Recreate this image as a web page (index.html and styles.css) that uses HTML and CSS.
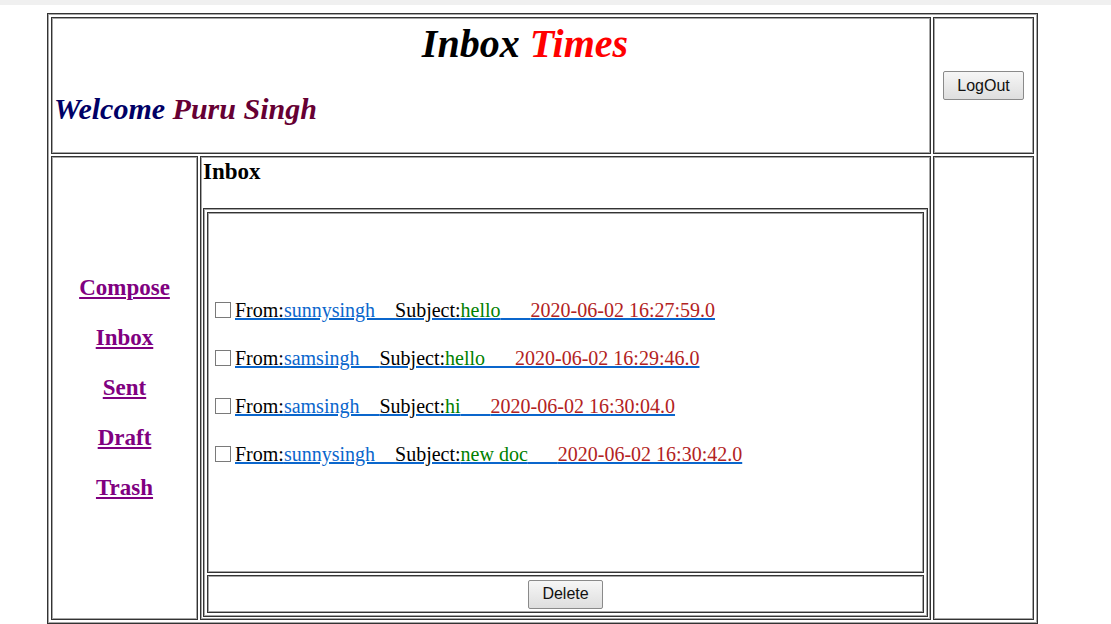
FILE: index.html
```html
<!DOCTYPE html>
<html lang="en">
<head>
    <meta charset="UTF-8">
    <title>Inbox Times</title>
    <link rel="stylesheet" href="styles.css">
</head>
<body>
    <div class="topbar"></div>
    <table class="frame">
        <tr>
            <td class="masthead" colspan="2">
                <h1 class="title">Inbox <span class="red">Times</span></h1>
                <h2 class="welcome">Welcome <span class="user">Puru Singh</span></h2>
            </td>
            <td class="logout"><button class="btn" type="button">LogOut</button></td>
        </tr>
        <tr>
            <td class="menu">
                <div class="menuitem"><a href="#">Compose</a></div>
                <div class="menuitem"><a href="#">Inbox</a></div>
                <div class="menuitem"><a href="#">Sent</a></div>
                <div class="menuitem"><a href="#">Draft</a></div>
                <div class="menuitem"><a href="#">Trash</a></div>
            </td>
            <td class="content">
                <h3 class="heading">Inbox</h3>
                <table class="mailbox">
                    <tr>
                        <td class="mails">
                            <div class="maillist">
                                <div class="mail"><input type="checkbox" class="pick"><a href="#" class="msg"><span class="label">From:</span>sunnysingh&nbsp;&nbsp;&nbsp;&nbsp;<span class="label">Subject:</span><span class="subj">hello</span>&nbsp;&nbsp;&nbsp;&nbsp;&nbsp;&nbsp;<span class="when">2020-06-02 16:27:59.0</span></a></div>
                                <div class="mail"><input type="checkbox" class="pick"><a href="#" class="msg"><span class="label">From:</span>samsingh&nbsp;&nbsp;&nbsp;&nbsp;<span class="label">Subject:</span><span class="subj">hello</span>&nbsp;&nbsp;&nbsp;&nbsp;&nbsp;&nbsp;<span class="when">2020-06-02 16:29:46.0</span></a></div>
                                <div class="mail"><input type="checkbox" class="pick"><a href="#" class="msg"><span class="label">From:</span>samsingh&nbsp;&nbsp;&nbsp;&nbsp;<span class="label">Subject:</span><span class="subj">hi</span>&nbsp;&nbsp;&nbsp;&nbsp;&nbsp;&nbsp;<span class="when">2020-06-02 16:30:04.0</span></a></div>
                                <div class="mail"><input type="checkbox" class="pick"><a href="#" class="msg"><span class="label">From:</span>sunnysingh&nbsp;&nbsp;&nbsp;&nbsp;<span class="label">Subject:</span><span class="subj">new doc</span>&nbsp;&nbsp;&nbsp;&nbsp;&nbsp;&nbsp;<span class="when">2020-06-02 16:30:42.0</span></a></div>
                            </div>
                        </td>
                    </tr>
                    <tr>
                        <td class="actions"><button class="btn" type="button">Delete</button></td>
                    </tr>
                </table>
            </td>
            <td class="side"></td>
        </tr>
    </table>
</body>
</html>
```
FILE: styles.css
```css
body {
    font-family: "Liberation Serif", "Times New Roman", serif;
    color: #000;
    background-color: #fff;
    margin: 0;
}
.topbar {
    height: 5px;
    background-color: #f0f0f0;
}
.frame,
.mailbox {
    border-collapse: separate;
    border-spacing: 2px;
    border: 1px solid #333;
    padding: 1px;
    box-shadow: inset 0 0 0 1px #a6a6a6;
}
.frame {
    margin: 8px 0 0 47px;
}
.mailbox {
    width: 100%;
    box-sizing: border-box;
}
.frame td,
.mailbox td {
    box-sizing: border-box;
    border: 1px solid #333;
    box-shadow: inset 0 0 0 1px #a6a6a6;
    padding: 2px;
}
.masthead {
    height: 137px;
    vertical-align: top;
}
.title {
    margin: 0;
    padding-left: 68px;
    text-align: center;
    font-size: 40px;
    font-style: italic;
    font-weight: bold;
}
.red {
    color: #ff0000;
}
.welcome {
    margin: 25px 0;
    font-size: 30px;
    font-style: italic;
    font-weight: bold;
    color: #000066;
}
.user {
    color: #660033;
}
.logout {
    width: 101px;
    text-align: center;
    vertical-align: middle;
}
.btn {
    font-family: "Liberation Sans", Arial, sans-serif;
    font-size: 16px;
    color: #111;
    height: 29px;
    padding: 0 13px;
    border: 1px solid #8a8a8a;
    border-radius: 2px;
    background: linear-gradient(#f6f6f6, #dedede);
}
.menu {
    width: 147px;
    text-align: center;
    vertical-align: middle;
}
.menuitem {
    font-size: 23px;
    line-height: 50px;
}
.menuitem a {
    color: #800080;
    font-weight: bold;
}
.content {
    width: 731px;
    vertical-align: top;
}
.heading {
    margin: 0 0 23px;
    font-size: 23px;
    font-weight: bold;
}
.mails {
    height: 361px;
    vertical-align: top;
}
.maillist {
    margin-top: 71px;
}
.mail {
    line-height: 48px;
    font-size: 20px;
}
.pick {
    appearance: none;
    box-sizing: border-box;
    width: 16px;
    height: 16px;
    margin: 0 4px 0 5px;
    border: 1px solid #7a7a7a;
    background-color: #fff;
    vertical-align: -1px;
}
.msg {
    color: #0a66cc;
    text-decoration: underline;
}
.label {
    color: #000;
}
.subj {
    color: #008000;
}
.when {
    color: #b22222;
}
.actions {
    height: 38px;
    text-align: center;
    vertical-align: middle;
}
.side {
    width: 101px;
}
```
